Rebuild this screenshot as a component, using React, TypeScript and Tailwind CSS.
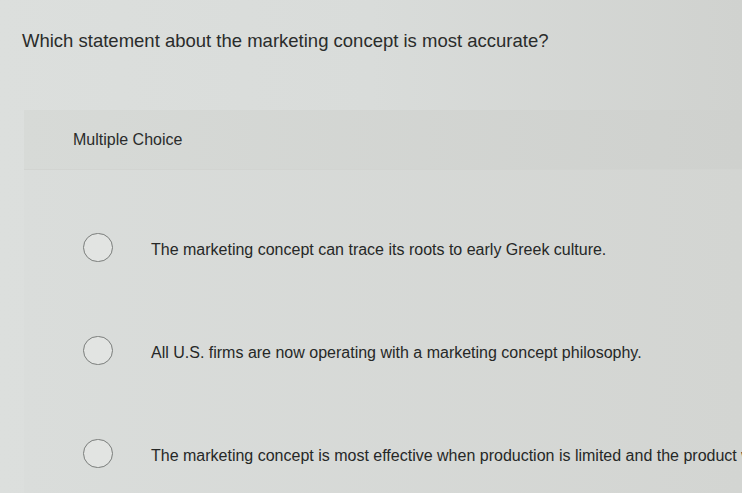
import React from 'react';

const CHOICES = [
  'The marketing concept can trace its roots to early Greek culture.',
  'All U.S. firms are now operating with a marketing concept philosophy.',
  'The marketing concept is most effective when production is limited and the product was not yet available to everyone.',
];

const Choice: React.FC<{ text: string }> = ({ text }) => (
  <div className="flex h-[103px] items-center">
    <span className="h-[29px] w-[30px] shrink-0 rounded-full border-[1.5px] border-[#7a7d7b] bg-[#e2e4e2]" />
    <span className="ml-[38px] mt-[5px] whitespace-nowrap text-[16px] text-[#262827]">{text}</span>
  </div>
);

export default function App() {
  return (
    <div
      className="h-[493px] w-[742px] overflow-hidden bg-gradient-to-r from-[#dcdfdd] via-[#d9dcda] to-[#d0d2cf]"
      style={{ fontFamily: '"Liberation Sans", Arial, sans-serif' }}
    >
      <div className="pl-[22px] pt-[30px] text-[18.5px] leading-[22px] text-[#2a2c2b]">
        Which statement about the marketing concept is most accurate?
      </div>

      <div className="ml-[24px] mt-[58px] bg-gradient-to-r from-[#d7dad7] to-[#cfd1ce]">
        {/* header */}
        <div className="flex h-[60px] items-center border-b border-[#d2d4d1] pl-[49px] text-[16px] text-[#2a2c2b]">
          Multiple Choice
        </div>

        {/* choices */}
        <div className="overflow-hidden pl-[59px] pt-[26px] bg-gradient-to-r from-[#dadddb] to-[#d3d5d2]">
          {CHOICES.map((c) => (
            <Choice key={c} text={c} />
          ))}
        </div>
      </div>
    </div>
  );
}
